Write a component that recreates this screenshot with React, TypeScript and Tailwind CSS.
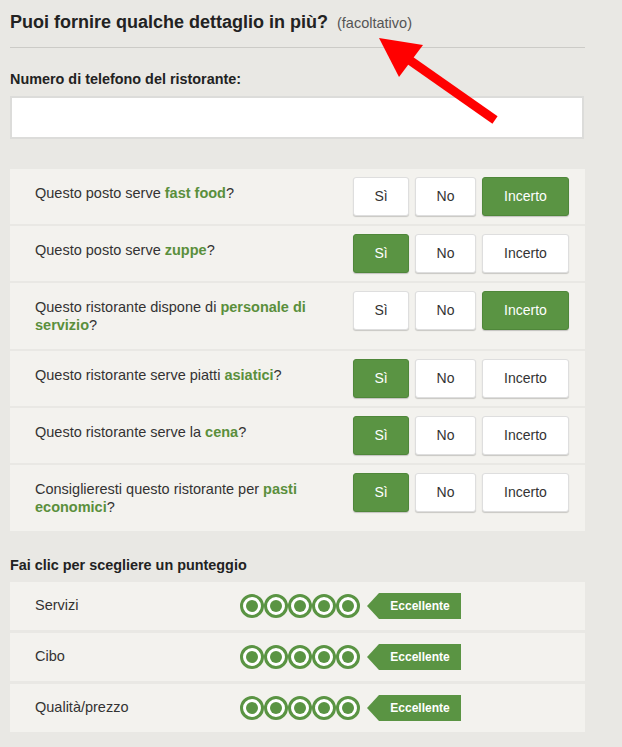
import React from "react";

type Answer = "si" | "no" | "incerto";

const questions: { pre: string; bold: string; post: string; answer: Answer }[] = [
  { pre: "Questo posto serve ", bold: "fast food", post: "?", answer: "incerto" },
  { pre: "Questo posto serve ", bold: "zuppe", post: "?", answer: "si" },
  { pre: "Questo ristorante dispone di ", bold: "personale di servizio", post: "?", answer: "incerto" },
  { pre: "Questo ristorante serve piatti ", bold: "asiatici", post: "?", answer: "si" },
  { pre: "Questo ristorante serve la ", bold: "cena", post: "?", answer: "si" },
  { pre: "Consiglieresti questo ristorante per ", bold: "pasti economici", post: "?", answer: "si" },
];

const ratings = ["Servizi", "Cibo", "Qualità/prezzo"];

function ChoiceButton({ label, active, width }: { label: string; active: boolean; width: string }) {
  return (
    <button
      className={
        "h-[39px] rounded-[3px] border text-[14px] flex items-center justify-center " +
        width +
        (active
          ? " bg-[#5a9443] border-[#4f873a] text-white shadow-[0_1px_1px_rgba(0,0,0,0.2)]"
          : " bg-white border-[#dedede] text-[#333] shadow-[0_1px_1px_rgba(0,0,0,0.18)]")
      }
    >
      {label}
    </button>
  );
}

function Bubble() {
  return (
    <div className="w-6 h-6 rounded-full border-[3px] border-[#5a9443] bg-white flex items-center justify-center">
      <div className="w-3 h-3 rounded-full bg-[#5a9443]" />
    </div>
  );
}

export default function App() {
  return (
    <div className="relative min-h-screen bg-[#e9e8e4] font-['Liberation_Sans',Arial,sans-serif] text-[#333]">
      <div className="w-[575px] ml-[10px] pt-[12px] pb-10">
        <div className="flex items-baseline pb-[12px] border-b border-[#cccbc7]">
          <h2 className="text-[18px] leading-[21px] font-bold text-[#222]">
            Puoi fornire qualche dettaglio in più?
          </h2>
          <span className="ml-[9px] text-[14.5px] text-[#555]">(facoltativo)</span>
        </div>

        <label className="block mt-[23px] text-[14.4px] leading-[17px] font-bold text-[#222]">
          Numero di telefono del ristorante:
        </label>
        <input
          type="text"
          className="block mt-[8px] w-[574px] h-[43px] bg-white border-2 border-[#dcdcda] outline-none"
        />

        <div className="mt-[30px] flex flex-col gap-[2px]">
          {questions.map((q, i) => (
            <div key={i} className="flex items-start bg-[#f3f2ee] pl-[25px] pr-4 py-2">
              <p className="flex-1 pr-[10px] py-[7px] text-[14.5px] leading-[18px]">
                {q.pre}
                <span className="font-bold text-[#5a8f3c]">{q.bold}</span>
                {q.post}
              </p>
              <div className="flex gap-[6px]">
                <ChoiceButton label="Sì" active={q.answer === "si"} width="w-[56px]" />
                <ChoiceButton label="No" active={q.answer === "no"} width="w-[61px]" />
                <ChoiceButton label="Incerto" active={q.answer === "incerto"} width="w-[87px]" />
              </div>
            </div>
          ))}
        </div>

        <h3 className="mt-[26px] text-[14.4px] leading-[17px] font-bold text-[#222]">
          Fai clic per scegliere un punteggio
        </h3>
        <div className="mt-[8px] flex flex-col gap-[3px]">
          {ratings.map((r) => (
            <div key={r} className="h-[48px] flex items-center bg-[#f3f2ee] pl-[25px]">
              <span className="w-[205px] text-[14.5px]">{r}</span>
              <div className="flex">
                <Bubble />
                <Bubble />
                <Bubble />
                <Bubble />
                <Bubble />
              </div>
              <div className="ml-[7px] flex items-center">
                <div className="w-0 h-0 border-y-[13px] border-y-transparent border-r-[12px] border-r-[#5a9443]" />
                <div className="h-[26px] w-[82px] bg-[#5a9443] text-white text-[12px] font-bold flex items-center justify-center">
                  Eccellente
                </div>
              </div>
            </div>
          ))}
        </div>
      </div>

      <svg
        className="absolute left-[370px] top-[30px] pointer-events-none"
        width="135"
        height="100"
        viewBox="370 30 135 100"
      >
        <polygon points="379,38 423,45 399,77" fill="#ff0000" />
        <line x1="408" y1="59" x2="495" y2="120" stroke="#ff0000" strokeWidth="9" />
      </svg>
    </div>
  );
}
